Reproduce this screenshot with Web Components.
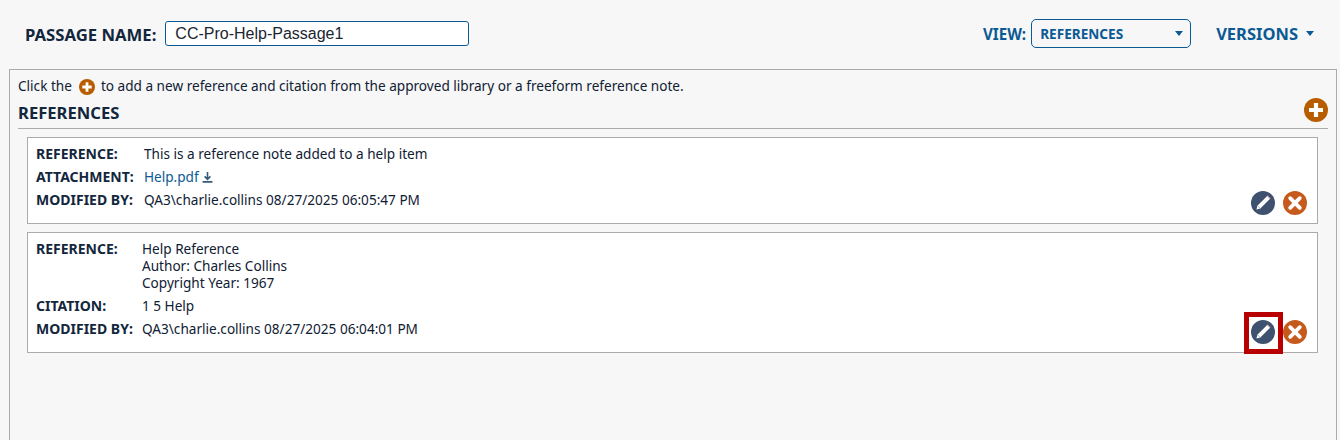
<!DOCTYPE html>
<html>
<head>
<meta charset="utf-8">
<title>References</title>
<style>
  html, body { margin: 0; height: 100%; overflow: hidden; }
  body { background: #f7f7f7; color: #0f2033; font: 13.6px "Noto Sans", sans-serif; }
</style>
</head>
<body>
<template id="t-page">
  <style>
    :host { display: flex; flex-direction: column; height: 440px; padding: 0 3px 0 9px; box-sizing: border-box; }
    .panel { flex: 1; border: 1px solid #ababab; border-bottom: 0; padding: 6px 8px 0; }
    .intro { display: flex; align-items: center; gap: 6px; height: 18px; }
    .intro round-icon { margin: 3px 0 0 1px; }
    .head { display: flex; justify-content: space-between; align-items: center; height: 25px; margin-top: 6px; padding-bottom: 3px; border-bottom: 1px solid #ababab; }
    .head round-icon { align-self: flex-start; margin-top: -2px; }
    h2 { margin: 0; font-size: 16.6px; font-weight: 700; color: #12263c; }
    .list { display: flex; flex-direction: column; gap: 8px; padding: 8px 10px 0 9px; }
  </style>
  <top-bar></top-bar>
  <div class="panel">
    <div class="intro">Click the <round-icon kind="plus" size="16"></round-icon> to add a new reference and citation from the approved library or a freeform reference note.</div>
    <div class="head"><h2>REFERENCES</h2><round-icon kind="plus" size="24"></round-icon></div>
    <div class="list"><slot></slot></div>
  </div>
</template>

<template id="t-bar">
  <style>
    :host { display: flex; align-items: center; height: 69px; padding: 0 23px 3px 16px; box-sizing: border-box; font-weight: 700; }
    .name { font-size: 16.7px; color: #12263c; margin: 2px 9px 0 0; }
    .input { width: 304px; height: 25px; box-sizing: border-box; border: 1px solid #0b5a94; border-radius: 3px; background: #fff; padding-left: 9px; font: 400 16px/23px "Liberation Sans", sans-serif; color: #1b2530; }
    .grow { flex: 1; }
    .view { color: #0b5a94; font-size: 15.2px; margin: 1px 5px 0 0; }
    .select { width: 160px; height: 29px; box-sizing: border-box; border: 1px solid #0b5a94; border-radius: 5px; display: flex; align-items: center; justify-content: space-between; padding: 1px 7px 0 8px; color: #0b5a94; font-size: 13.6px; }
    .caret { width: 0; height: 0; border: 4px solid transparent; border-top: 5px solid #0b5a94; border-bottom: 0; }
    .versions { display: flex; align-items: center; gap: 8px; margin: 0 0 0 25px; color: #0b5a94; font-size: 16.5px; }
  </style>
  <span class="name">PASSAGE NAME:</span>
  <div class="input">CC-Pro-Help-Passage1</div>
  <div class="grow"></div>
  <span class="view">VIEW:</span>
  <div class="select">REFERENCES<i class="caret"></i></div>
  <div class="versions">VERSIONS<i class="caret"></i></div>
</template>

<template id="t-card">
  <style>
    :host { display: block; position: relative; box-sizing: border-box; border: 1px solid #ababab; background: #fff; padding: 7px 8px; }
    .acts { position: absolute; right: 10px; bottom: 8px; display: flex; gap: 8px; }
    .mark { position: relative; display: flex; }
    :host([marked]) .mark::after { content: ""; position: absolute; inset: -8px -8px -10px -7px; border: 5px solid #b80000; }
  </style>
  <slot></slot>
  <div class="acts">
    <span class="mark"><round-icon kind="pencil" size="24"></round-icon></span>
    <round-icon kind="close" size="24"></round-icon>
  </div>
</template>

<template id="t-row">
  <style>
    :host { display: grid; grid-template-columns: var(--label, 108px) 1fr; line-height: 17px; margin-bottom: 6px; }
    :host(:last-child) { margin-bottom: 0; }
    b { font-weight: 700; color: #12263c; font-size: 14px; white-space: nowrap; }
  </style>
  <b><slot name="label"></slot></b>
  <div><slot></slot></div>
</template>

<script>
  const ICONS = {
    plus: `<circle cx="12" cy="12" r="12" fill="#b85c00"/><path d="M12 5v14M5 12h14" stroke="#fff" stroke-width="4.2" fill="none"/>`,
    close: `<circle cx="12" cy="12" r="12" fill="#c65a1c"/><path d="M7.2 7.2l9.6 9.6M16.8 7.2l-9.6 9.6" stroke="#fff" stroke-width="3.8" fill="none" stroke-linecap="round"/>`,
    pencil: `<circle cx="12" cy="12" r="12" fill="#3e5270"/><path d="M5.4 18.6l1-3.9 9.8-9.8 2.9 2.9-9.8 9.8z" fill="#fff"/><path d="M6.4 14.7l2.9 2.9" stroke="#8fa6c4" stroke-width=".9"/><path d="M16.2 4.9l2.9 2.9" stroke="#f4b8b8" stroke-width="1.2"/>`
  };

  function define(name, tpl) {
    customElements.define(name, class extends HTMLElement {
      constructor() {
        super();
        this.attachShadow({ mode: "open" }).appendChild(document.getElementById(tpl).content.cloneNode(true));
      }
    });
  }

  customElements.define("round-icon", class extends HTMLElement {
    connectedCallback() {
      const s = this.getAttribute("size") || 24;
      this.attachShadow({ mode: "open" }).innerHTML =
        "<style>:host{display:inline-flex;flex:none}svg{display:block}</style>" +
        `<svg width="${s}" height="${s}" viewBox="0 0 24 24">${ICONS[this.getAttribute("kind")]}</svg>`;
    }
  });

  customElements.define("file-link", class extends HTMLElement {
    connectedCallback() {
      this.attachShadow({ mode: "open" }).innerHTML =
        "<style>:host{display:inline-flex;align-items:center;gap:3px;color:#0b5a94}</style><slot></slot>" +
        '<svg width="11" height="12" viewBox="0 0 11 12" fill="none" stroke="#34597c" stroke-width="1.6"><path d="M5.5 1v7M2.6 5.4l2.9 2.9 2.9-2.9M.6 10.9h9.8"/></svg>';
    }
  });

  define("top-bar", "t-bar");
  define("app-page", "t-page");
  define("ref-card", "t-card");
  define("ref-row", "t-row");
</script>

<app-page>
  <ref-card style="height:87px">
    <ref-row><span slot="label">REFERENCE:</span>This is a reference note added to a help item</ref-row>
    <ref-row><span slot="label">ATTACHMENT:</span><file-link>Help.pdf</file-link></ref-row>
    <ref-row><span slot="label">MODIFIED BY:</span>QA3\charlie.collins 08/27/2025 06:05:47 PM</ref-row>
  </ref-card>
  <ref-card marked style="height:121px;--label:106px">
    <ref-row><span slot="label">REFERENCE:</span>Help Reference<br>Author: Charles Collins<br>Copyright Year: 1967</ref-row>
    <ref-row><span slot="label">CITATION:</span>1 5 Help</ref-row>
    <ref-row><span slot="label">MODIFIED BY:</span>QA3\charlie.collins 08/27/2025 06:04:01 PM</ref-row>
  </ref-card>
</app-page>
</body>
</html>
